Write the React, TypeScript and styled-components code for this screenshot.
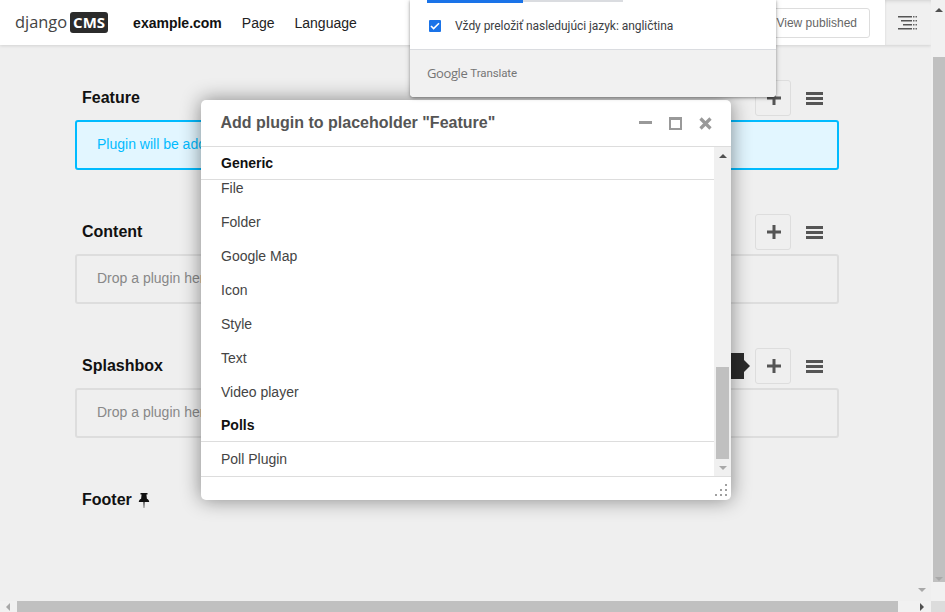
import React from "react";
import styled, { createGlobalStyle } from "styled-components";

const Global = createGlobalStyle`
  html, body { margin: 0; padding: 0; height: 100%; overflow: hidden; background: #efefef; }
  * { box-sizing: border-box; }
  body { font-family: "Liberation Sans", Arial, sans-serif; color: #000; }
`;

const Viewport = styled.div`
  position: relative;
  width: 945px;
  height: 612px;
  overflow: hidden;
  display: grid;
  grid-template-columns: 931px 14px;
  grid-template-rows: 601px 11px;
  background: #efefef;
`;

const Stage = styled.div`
  position: relative;
  display: flex;
  flex-direction: column;
  min-width: 0;
`;

const Toolbar = styled.header`
  height: 45px;
  flex: none;
  display: flex;
  align-items: center;
  background: #fff;
  box-shadow: 0 1px 3px rgba(0, 0, 0, 0.12);
  padding-left: 15px;
`;

const Logo = styled.div`
  display: flex;
  align-items: center;
  gap: 3px;
  margin-right: 25px;
`;

const LogoWord = styled.span`
  font-family: "Open Sans", sans-serif;
  font-size: 16.4px;
  line-height: 21px;
  color: #444;
  position: relative;
  top: -1px;
`;

const LogoBox = styled.span`
  width: 38px;
  height: 21px;
  border-radius: 3px;
  background: #2b2b2b;
  color: #fff;
  font-family: "Open Sans", sans-serif;
  font-weight: 700;
  font-size: 15px;
  line-height: 21px;
  text-align: center;
`;

const NavItem = styled.span<{ $bold?: boolean }>`
  font-size: 14px;
  font-weight: ${(p) => (p.$bold ? 700 : 400)};
  color: ${(p) => (p.$bold ? "#111" : "#222")};
  margin-right: ${(p) => (p.$bold ? "20px" : "20px")};
`;

const ToolbarRight = styled.div`
  margin-left: auto;
  display: flex;
  align-items: center;
  height: 100%;
`;

const PublishedButton = styled.div`
  height: 30px;
  width: 170px;
  margin-right: 15px;
  border: 1px solid #ddd;
  border-radius: 3px;
  display: flex;
  align-items: center;
  justify-content: flex-end;
  padding-right: 12px;
  font-size: 12px;
  color: #666;
`;

const SideToggle = styled.div`
  width: 46px;
  height: 100%;
  background: #f0f0f0;
  box-shadow: inset 0 4px 4px -3px rgba(0, 0, 0, 0.12), inset 1px 0 2px rgba(0, 0, 0, 0.05);
  display: flex;
  align-items: center;
  justify-content: center;
`;

const Content = styled.main`
  flex: 1;
  padding: 35px 92px 0 75px;
`;

const Section = styled.section`
  margin-bottom: 44px;
`;

const SectionHead = styled.div`
  position: relative;
  height: 36px;
  margin-bottom: 4px;
  display: flex;
  align-items: center;
  padding-left: 7px;
`;

const SectionTitle = styled.h2`
  margin: 0;
  font-size: 16px;
  font-weight: 700;
  color: #111;
  display: flex;
  align-items: center;
  gap: 6px;
`;

const Actions = styled.div`
  margin-left: auto;
  display: flex;
  align-items: center;
  gap: 15px;
  padding-right: 16px;
`;

const AddButton = styled.div`
  position: relative;
  width: 36px;
  height: 36px;
  border: 1px solid #ddd;
  border-radius: 3px;
  padding: 0 0 1px 2px;
  display: flex;
  align-items: center;
  justify-content: center;
`;

const Tag = styled.div`
  position: absolute;
  right: 46px;
  top: 4px;
  width: 30px;
  height: 26px;
  background: #2b2b2b;
  &::after {
    content: "";
    position: absolute;
    left: 100%;
    top: 7px;
    border-left: 6px solid #2b2b2b;
    border-top: 6px solid transparent;
    border-bottom: 6px solid transparent;
  }
`;

const Bars = styled.div`
  width: 17px;
  display: flex;
  flex-direction: column;
  gap: 2px;
  & > i {
    display: block;
    height: 3px;
    background: #555;
  }
`;

const DropZone = styled.div<{ $active?: boolean }>`
  height: 50px;
  border: 2px solid ${(p) => (p.$active ? "#00bbff" : "#dddddd")};
  background: ${(p) => (p.$active ? "#e2f6ff" : "transparent")};
  border-radius: 3px;
  display: flex;
  align-items: center;
  padding: 0 0 2px 20px;
  font-size: 14px;
  color: ${(p) => (p.$active ? "#00bbff" : "#888")};
`;

const VTrack = styled.div`
  position: relative;
  background: #f1f1f1;
  padding: 57px 0 19px 2px;
  display: flex;
`;

const VThumb = styled.div`
  flex: 1;
  background: #c0c0c0;
`;

const HTrack = styled.div`
  position: relative;
  padding-left: 17px;
  padding-right: 33px;
  display: flex;
  background: #f1f1f1;
`;

const HThumb = styled.div`
  flex: 1;
  background: #c0c0c0;
`;

const Corner = styled.div`
  background: #dcdcdc;
`;

const Arrow = styled.span<{ $dir: "up" | "down" | "left" | "right"; $color?: string }>`
  position: absolute;
  width: 0;
  height: 0;
  ${(p) => {
    const c = p.$color || "#a8a8a8";
    if (p.$dir === "up") return `border-left:4px solid transparent;border-right:4px solid transparent;border-bottom:4px solid ${c};`;
    if (p.$dir === "down") return `border-left:4px solid transparent;border-right:4px solid transparent;border-top:4px solid ${c};`;
    if (p.$dir === "left") return `border-top:4px solid transparent;border-bottom:4px solid transparent;border-right:4px solid ${c};`;
    return `border-top:4px solid transparent;border-bottom:4px solid transparent;border-left:4px solid ${c};`;
  }}
`;

const VUp = styled(Arrow)`
  top: 8px;
  right: 2px;
`;
const VDown = styled(Arrow)`
  bottom: 20px;
  right: 2px;
`;
const StageDown = styled(Arrow)`
  right: 5px;
  bottom: 9px;
`;
const HLeft = styled(Arrow)`
  left: 6px;
  top: 2px;
`;
const HRight = styled(Arrow)`
  right: 7px;
  top: 2px;
`;

const Popup = styled.aside`
  position: absolute;
  left: 410px;
  top: 0;
  width: 366px;
  height: 97px;
  z-index: 3;
  background: #fff;
  border-radius: 0 0 4px 4px;
  box-shadow: 0 1px 3px rgba(0, 0, 0, 0.35), 0 0 6px rgba(0, 0, 0, 0.15);
  display: flex;
  flex-direction: column;
  overflow: hidden;
`;

const TabRail = styled.div`
  display: flex;
  margin-left: 17px;
  height: 3px;
  flex: none;
`;

const TabLine = styled.div<{ $active?: boolean }>`
  width: ${(p) => (p.$active ? "96px" : "100px")};
  height: ${(p) => (p.$active ? "3px" : "2px")};
  background: ${(p) => (p.$active ? "#1a73e8" : "#dadce0")};
`;

const CheckRow = styled.div`
  flex: 1;
  display: flex;
  align-items: center;
  gap: 14px;
  padding: 0 0 0 19px;
  font-family: "Roboto", "Liberation Sans", sans-serif;
  font-size: 12px;
  color: #3c4043;
  letter-spacing: -0.05px;
`;

const CheckBox = styled.span`
  width: 12px;
  height: 12px;
  border-radius: 1px;
  background: #1a73e8;
  display: flex;
  align-items: center;
  justify-content: center;
`;

const PopupFoot = styled.div`
  height: 48px;
  flex: none;
  background: #f1f1f1;
  border-top: 1px solid #dadce0;
  display: flex;
  align-items: center;
  gap: 3px;
  padding: 0 0 2px 17px;
  color: #757575;
`;

const GoogleWord = styled.span`
  font-family: "Open Sans", sans-serif;
  font-size: 13px;
  letter-spacing: -0.4px;
`;

const TranslateWord = styled.span`
  font-family: "Roboto", sans-serif;
  font-size: 11.5px;
  letter-spacing: -0.1px;
`;

const Modal = styled.div`
  position: absolute;
  left: 201px;
  top: 100px;
  width: 530px;
  height: 400px;
  z-index: 2;
  background: #fff;
  border-radius: 5px;
  box-shadow: 0 0 20px rgba(0, 0, 0, 0.45);
  display: flex;
  flex-direction: column;
  overflow: hidden;
`;

const ModalHead = styled.div`
  height: 47px;
  flex: none;
  border-bottom: 1px solid #ddd;
  display: flex;
  align-items: center;
  padding: 0 19px 0 19.5px;
`;

const ModalTitle = styled.h3`
  margin: 0;
  flex: 1;
  font-size: 16px;
  font-weight: 700;
  color: #555;
`;

const ModalIcons = styled.div`
  display: flex;
  align-items: center;
  gap: 17px;
`;

const ModalBody = styled.div`
  flex: 1;
  min-height: 0;
  display: flex;
`;

const List = styled.div`
  flex: 1;
  min-width: 0;
  overflow: hidden;
`;

const GroupTitle = styled.div`
  height: 33px;
  border-bottom: 1px solid #ddd;
  display: flex;
  align-items: center;
  padding: 0 0 1px 20px;
  font-size: 14px;
  font-weight: 700;
  color: #111;
`;

const ListRow = styled.div<{ $cut?: boolean }>`
  height: ${(p) => (p.$cut ? "25px" : "34px")};
  display: flex;
  align-items: ${(p) => (p.$cut ? "flex-start" : "center")};
  padding-left: 20px;
  font-size: 14px;
  line-height: 16px;
  color: #444;
`;

const ListScroll = styled.div`
  position: relative;
  width: 17px;
  flex: none;
  background: #f0f0f0;
  padding: 220px 2px 17px;
  display: flex;
`;

const ListUp = styled(Arrow)`
  top: 7px;
  left: 5px;
`;
const ListDown = styled(Arrow)`
  bottom: 6px;
  left: 5px;
`;

const ModalFoot = styled.div`
  height: 24px;
  flex: none;
  border-top: 1px solid #ddd;
  display: flex;
  justify-content: flex-end;
  align-items: flex-end;
  padding: 0 4px 4px 0;
`;

const Plus = () => (
  <svg width="14" height="14" viewBox="0 0 14 14" fill="#555">
    <rect x="5.5" y="0" width="3" height="14" />
    <rect x="0" y="5.5" width="14" height="3" />
  </svg>
);

const Pin = () => (
  <svg width="12" height="15" viewBox="0 0 12 15" fill="#111">
    <path d="M2.5 0h7v1.5H8.4l.5 4.3c1.3.6 2.3 1.7 2.3 3.2H6.6l-.4 6h-.4l-.4-6H.8c0-1.5 1-2.6 2.3-3.2l.5-4.3H2.5z" />
  </svg>
);

const StructureIcon = () => (
  <svg width="20" height="14" viewBox="0 0 20 14">
    <g fill="#555">
      <rect x="0" y="0" width="14" height="1.5" />
      <rect x="3" y="4" width="11" height="1.5" />
      <rect x="5" y="8" width="9" height="1.5" />
      <rect x="0" y="12" width="14" height="1.5" />
    </g>
    <g fill="#666">
      {[0, 4, 8, 12].map((y) =>
        [15, 17.5].map((x) => <rect key={`${x}-${y}`} x={x} y={y} width="1.5" height="1.5" />)
      )}
    </g>
  </svg>
);

const Minimize = () => (
  <svg width="13" height="13" viewBox="0 0 13 13"><rect x="0" y="4" width="13" height="3" fill="#999" /></svg>
);
const Maximize = () => (
  <svg width="13" height="13" viewBox="0 0 13 13">
    <path d="M0 0h13v13H0z M2 3v8h9V3z" fill="#999" fillRule="evenodd" />
  </svg>
);
const Close = () => (
  <svg width="13" height="13" viewBox="0 0 13 13">
    <path d="M1.5 1.5l10 10M11.5 1.5l-10 10" stroke="#999" strokeWidth="3.2" />
  </svg>
);
const Check = () => (
  <svg width="10" height="8" viewBox="0 0 10 8">
    <path d="M1 4l2.6 2.6L9 1.2" stroke="#fff" strokeWidth="1.6" fill="none" />
  </svg>
);
const Grip = () => (
  <svg width="12" height="12" viewBox="0 0 12 12" fill="#a0a0a0">
    {[[10, 0], [5, 5], [10, 5], [0, 10], [5, 10], [10, 10]].map(([x, y]) => (
      <rect key={`${x}-${y}`} x={x} y={y} width="2" height="2" />
    ))}
  </svg>
);

const PLACEHOLDERS = [
  { name: "Feature", active: true },
  { name: "Content" },
  { name: "Splashbox", tag: true },
];

const GENERIC = ["Folder", "Google Map", "Icon", "Style", "Text", "Video player"];

export default function App() {
  return (
    <Viewport>
      <Global />
      <Stage>
        <Toolbar>
          <Logo>
            <LogoWord>django</LogoWord>
            <LogoBox>CMS</LogoBox>
          </Logo>
          <NavItem $bold>example.com</NavItem>
          <NavItem>Page</NavItem>
          <NavItem>Language</NavItem>
          <ToolbarRight>
            <PublishedButton>View published</PublishedButton>
            <SideToggle>
              <StructureIcon />
            </SideToggle>
          </ToolbarRight>
        </Toolbar>
        <Content>
          {PLACEHOLDERS.map((p) => (
            <Section key={p.name}>
              <SectionHead>
                <SectionTitle>{p.name}</SectionTitle>
                <Actions>
                  <AddButton>
                    {p.tag && <Tag />}
                    <Plus />
                  </AddButton>
                  <Bars>
                    <i />
                    <i />
                    <i />
                  </Bars>
                </Actions>
              </SectionHead>
              <DropZone $active={p.active}>
                {p.active ? "Plugin will be added here" : "Drop a plugin here"}
              </DropZone>
            </Section>
          ))}
          <Section>
            <SectionHead>
              <SectionTitle>
                Footer <Pin />
              </SectionTitle>
            </SectionHead>
          </Section>
        </Content>
        <StageDown $dir="down" />
      </Stage>
      <VTrack>
        <VUp $dir="up" $color="#505050" />
        <VThumb />
        <VDown $dir="down" />
      </VTrack>
      <HTrack>
        <HLeft $dir="left" />
        <HThumb />
        <HRight $dir="right" $color="#505050" />
      </HTrack>
      <Corner />

      <Popup>
        <TabRail>
          <TabLine $active />
          <TabLine />
        </TabRail>
        <CheckRow>
          <CheckBox>
            <Check />
          </CheckBox>
          Vždy preložiť nasledujúci jazyk: angličtina
        </CheckRow>
        <PopupFoot>
          <GoogleWord>Google</GoogleWord>
          <TranslateWord>Translate</TranslateWord>
        </PopupFoot>
      </Popup>

      <Modal>
        <ModalHead>
          <ModalTitle>Add plugin to placeholder "Feature"</ModalTitle>
          <ModalIcons>
            <Minimize />
            <Maximize />
            <Close />
          </ModalIcons>
        </ModalHead>
        <ModalBody>
          <List>
            <GroupTitle>Generic</GroupTitle>
            <ListRow $cut>File</ListRow>
            {GENERIC.map((g) => (
              <ListRow key={g}>{g}</ListRow>
            ))}
            <GroupTitle>Polls</GroupTitle>
            <ListRow>Poll Plugin</ListRow>
          </List>
          <ListScroll>
            <ListUp $dir="up" $color="#505050" />
            <VThumb />
            <ListDown $dir="down" />
          </ListScroll>
        </ModalBody>
        <ModalFoot>
          <Grip />
        </ModalFoot>
      </Modal>
    </Viewport>
  );
}
